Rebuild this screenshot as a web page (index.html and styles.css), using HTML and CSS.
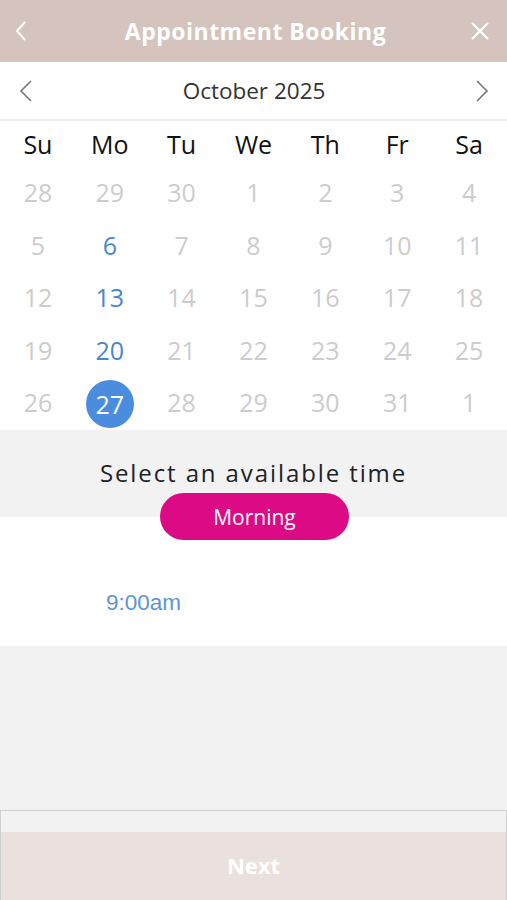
FILE: index.html
```html
<!DOCTYPE html>
<html lang="en">
<head>
<meta charset="utf-8">
<title>Appointment Booking</title>
<link rel="stylesheet" href="styles.css">
</head>
<body>
<div class="app">
  <header class="topbar">
    <svg class="icon back" width="14" height="22" viewBox="0 0 14 22"><polyline points="11,2 3,11 11,20" fill="none" stroke="#fff" stroke-width="2"/></svg>
    <h1 class="title">Appointment Booking</h1>
    <svg class="icon close" width="20" height="20" viewBox="0 0 20 20"><path d="M2 2 L18 18 M18 2 L2 18" fill="none" stroke="#fff" stroke-width="2.2"/></svg>
  </header>

  <div class="month-row">
    <svg class="chev" width="14" height="22" viewBox="0 0 14 22"><polyline points="12,1 2,11 12,21" fill="none" stroke="#777" stroke-width="1.6"/></svg>
    <div class="month">October 2025</div>
    <svg class="chev" width="14" height="22" viewBox="0 0 14 22"><polyline points="2,1 12,11 2,21" fill="none" stroke="#777" stroke-width="1.6"/></svg>
  </div>

  <div class="weekdays">
    <span>Su</span><span>Mo</span><span>Tu</span><span>We</span><span>Th</span><span>Fr</span><span>Sa</span>
  </div>
  <div class="days">
    <span>28</span><span>29</span><span>30</span><span>1</span><span>2</span><span>3</span><span>4</span>
    <span>5</span><span class="avail">6</span><span>7</span><span>8</span><span>9</span><span>10</span><span>11</span>
    <span>12</span><span class="avail">13</span><span>14</span><span>15</span><span>16</span><span>17</span><span>18</span>
    <span>19</span><span class="avail">20</span><span>21</span><span>22</span><span>23</span><span>24</span><span>25</span>
    <span>26</span><span class="selected"><b>27</b></span><span>28</span><span>29</span><span>30</span><span>31</span><span>1</span>
  </div>

  <section class="time-head">
    <div class="time-title">Select an available time</div>
    <div class="pill">Morning</div>
  </section>

  <section class="slots">
    <a class="slot">9:00am</a>
  </section>

  <div class="filler"></div>

  <footer class="footer">
    <div class="footer-gap"></div>
    <button class="next">Next</button>
  </footer>
</div>
</body>
</html>
```
FILE: styles.css
```css
* { box-sizing: border-box; }
html, body { margin: 0; padding: 0; }
body {
  width: 507px;
  height: 900px;
  overflow: hidden;
  font-family: "Open Sans", "Liberation Sans", sans-serif;
  background: #f2f2f2;
}
.app { display: flex; flex-direction: column; height: 900px; }

.topbar {
  height: 62px;
  background: #d5c4bd;
  display: grid;
  grid-template-columns: 1fr auto 1fr;
  align-items: center;
  padding: 0 17px 0 14px;
}
.topbar .back { justify-self: start; }
.topbar .close { justify-self: end; }
.title {
  margin: 0;
  color: #fff;
  font-weight: 700;
  font-size: 23px;
  letter-spacing: 0.5px;
  padding-left: 7px;
}

.month-row {
  height: 59px;
  background: #fff;
  border-bottom: 2px solid #eeeeee;
  display: flex;
  align-items: center;
  justify-content: space-between;
  padding: 0 18px 0 19px;
}
.month { font-size: 22.5px; color: #333; }

.weekdays, .days {
  display: grid;
  grid-template-columns: repeat(7, 1fr);
  background: #fff;
  padding: 0 2px;
}
.weekdays span {
  height: 45px;
  display: flex; align-items: center; justify-content: center;
  font-size: 25px; color: #111;
}
.days { grid-auto-rows: 52.5px; padding-bottom: 1.5px; }
.days span {
  display: flex; align-items: center; justify-content: center;
  font-size: 25px; color: #cccccc;
}
.days span.avail { color: #4a86cf; }
.days span.selected b {
  font-weight: 400;
  width: 48px; height: 48px;
  border-radius: 50%;
  background: #4a8ddf;
  color: #fff;
  display: flex; align-items: center; justify-content: center;
  margin-top: 4px;
}

.time-head {
  height: 87px;
  background: #f2f2f2;
  padding-top: 27px;
  display: flex;
  flex-direction: column;
  align-items: center;
}
.time-title {
  font-size: 24px;
  line-height: 32px;
  letter-spacing: 1.9px;
  color: #222;
}
.pill {
  position: relative;
  z-index: 1;
  margin-top: 4px;
  margin-left: 2px;
  width: 189px;
  height: 47px;
  flex: none;
  border-radius: 24px;
  background: #dc0a84;
  color: #fff;
  font-size: 21px;
  display: flex; align-items: center; justify-content: center;
}

.slots {
  height: 129px;
  background: #fff;
  padding: 72px 0 0 106px;
}
.slot {
  font-family: "Liberation Sans", Arial, sans-serif;
  font-size: 22.5px;
  color: #5b95d4;
  line-height: 28px;
}

.filler { flex: 1; background: #f2f2f2; }

.footer {
  height: 90px;
  border: 1px solid #cfcfcf;
  border-bottom: none;
  display: flex;
  flex-direction: column;
}
.footer-gap { height: 21px; background: #f2f2f2; }
.next {
  flex: 1;
  border: none;
  background: #eae0dd;
  color: #fff;
  font-family: "Open Sans", "Liberation Sans", sans-serif;
  font-weight: 700;
  font-size: 22px;
  padding: 0 0 2px 0;
}
```
